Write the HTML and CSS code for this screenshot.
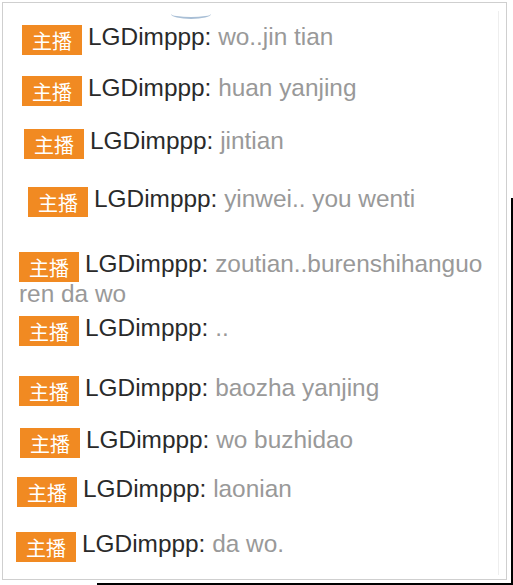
FILE: index.html
```html
<!DOCTYPE html>
<html lang="zh">
<head>
<meta charset="utf-8">
<title>Chat</title>
<link rel="stylesheet" href="styles.css">
</head>
<body>
<div class="back-frame"></div>
<div class="panel">
  <span class="arc"></span>
  <div class="row"><span class="badge">主播</span><span class="name">LGDimppp:</span> <span class="msg">wo..jin tian</span></div>
  <div class="row"><span class="badge">主播</span><span class="name">LGDimppp:</span> <span class="msg">huan yanjing</span></div>
  <div class="row"><span class="badge">主播</span><span class="name">LGDimppp:</span> <span class="msg">jintian</span></div>
  <div class="row"><span class="badge">主播</span><span class="name">LGDimppp:</span> <span class="msg">yinwei.. you wenti</span></div>
  <div class="row"><span class="badge">主播</span><span class="name">LGDimppp:</span> <span class="msg">zoutian..burenshihanguo ren da wo</span></div>
  <div class="row"><span class="badge">主播</span><span class="name">LGDimppp:</span> <span class="msg">..</span></div>
  <div class="row"><span class="badge">主播</span><span class="name">LGDimppp:</span> <span class="msg">baozha yanjing</span></div>
  <div class="row"><span class="badge">主播</span><span class="name">LGDimppp:</span> <span class="msg">wo buzhidao</span></div>
  <div class="row"><span class="badge">主播</span><span class="name">LGDimppp:</span> <span class="msg">laonian</span></div>
  <div class="row"><span class="badge">主播</span><span class="name">LGDimppp:</span> <span class="msg">da wo.</span></div>
</div>
</body>
</html>
```
FILE: styles.css
```css
html, body {
  margin: 0;
  padding: 0;
  background: #ffffff;
}
body {
  width: 513px;
  height: 585px;
  position: relative;
  overflow: hidden;
}
.back-frame {
  position: absolute;
  left: 97px;
  top: 198px;
  width: 414px;
  height: 385px;
  border-right: 2px solid #000;
  border-bottom: 2px solid #000;
}
.panel {
  position: relative;
  box-sizing: border-box;
  margin: 2px 0 0 2px;
  width: 505px;
  height: 578px;
  background: #fff;
  border: 1px solid #cfcfcf;
  padding-top: 22px;
  font-family: "Liberation Sans", Arial, sans-serif;
  font-size: 24.4px;
  line-height: 23.1px;
}
.panel::after {
  content: "";
  position: absolute;
  top: 8px;
  bottom: 4px;
  right: 7px;
  border-right: 1px solid #eeeeee;
}
.arc {
  position: absolute;
  left: 168px;
  top: 6px;
  width: 40px;
  height: 8px;
  border-bottom: 2px solid #a9bfd6;
  border-radius: 0 0 50% 50%;
}
.row {
  padding-right: 10px;
}
.badge {
  display: inline-block;
  width: 60px;
  height: 30px;
  line-height: 31px;
  background: #f18a22;
  color: #fff;
  text-align: center;
  font-family: "Noto Sans CJK SC", sans-serif;
  font-size: 20px;
  vertical-align: top;
  margin-right: 6px;
}
.name {
  color: #2a2a2a;
}
.msg {
  color: #999999;
}
.row:nth-child(2)  { padding-left: 19px; }
.row:nth-child(3)  { padding-left: 19px; margin-top: 21px; }
.row:nth-child(4)  { padding-left: 21px; margin-top: 23px; }
.row:nth-child(5)  { padding-left: 25px; margin-top: 28px; }
.row:nth-child(6)  { padding-left: 16px; margin-top: 35px; }
.row:nth-child(7)  { padding-left: 16px; margin-top: 10.6px; }
.row:nth-child(8)  { padding-left: 16px; margin-top: 30px; }
.row:nth-child(9)  { padding-left: 17px; margin-top: 22px; }
.row:nth-child(10) { padding-left: 14px; margin-top: 19px; }
.row:nth-child(11) { padding-left: 13px; margin-top: 25px; }
```
